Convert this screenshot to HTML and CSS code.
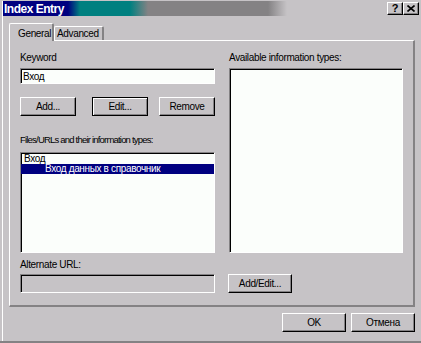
FILE: index.html
```html
<!DOCTYPE html>
<html lang="en">
<head>
	<meta charset="UTF-8">
	<title>Index Entry</title>
	<link rel="stylesheet" href="styles.css">
</head>
<body>
	<div class="window">
		<div class="frame">
			<div class="titlebar">
				<div class="title">Index Entry</div>
				<div class="tbtn">?</div>
				<div class="tbtn">
					<svg width="8" height="7" viewBox="0 0 8 7"><path d="M0.5 0.5 L7.5 6.5 M7.5 0.5 L0.5 6.5" stroke="#000" stroke-width="1.6" fill="none"/></svg>
				</div>
			</div>
			<div class="tabs">
				<div class="tab active">General</div>
				<div class="tab">Advanced</div>
			</div>
			<div class="panel">
				<div class="lbl top">Keyword</div>
				<div class="lbl top right">Available information types:</div>
				<input type="text" class="field" value="Вход">
				<div class="list right-list"></div>
				<div class="btnRow">
					<button class="btn">Add...</button>
					<button class="btn default edit">Edit...</button>
					<button class="btn remove">Remove</button>
				</div>
				<div class="lbl files">Files/URLs and their information types:</div>
				<div class="list files-list">
					<div class="item">Вход</div>
					<div class="item sel">Вход данных в справочник</div>
				</div>
				<div class="lbl alt">Alternate URL:</div>
				<input type="text" class="field disabled" disabled>
				<button class="btn addEdit">Add/Edit...</button>
			</div>
			<div class="footer">
				<button class="btn wide">OK</button>
				<button class="btn wide">Отмена</button>
			</div>
		</div>
	</div>
</body>
</html>
```

FILE: styles.css
```css
*{
	margin: 0;
	padding: 0;
	box-sizing: border-box;
}
body{
	background-color: #c6c3c6;
	font-family: "Liberation Sans", Arial, sans-serif;
	font-size: 10px;
	letter-spacing: -0.35px;
	color: #000;
}
.window{
	width: 421px;
	height: 343px;
	padding: 1px 0 0 2px;
	border-bottom: 2px solid #848284;
}
.frame{
	height: 100%;
	border-left: 1px solid #fff;
	display: flex;
	flex-direction: column;
}
.titlebar{
	height: 15px;
	display: flex;
	align-items: center;
	padding: 0 2px 0 1px;
	background: linear-gradient(to right, #000080 0, #000080 65px, #008080 77px, #008080 127px, #848284 145px, #848284 265px, #c6c3c6 284px);
	color: #fff;
}
.title{
	flex: 1;
	font-size: 12px;
	font-weight: bold;
	letter-spacing: -0.5px;
}
.tbtn{
	width: 16px;
	height: 13px;
	display: flex;
	align-items: center;
	justify-content: center;
	background-color: #c6c3c6;
	border: 1px solid;
	border-color: #fff #000 #000 #fff;
	box-shadow: inset -1px -1px #848284;
	color: #000;
	font-size: 11px;
	font-weight: bold;
	line-height: 11px;
	letter-spacing: 0;
}
.tabs{
	display: flex;
	align-items: flex-end;
	height: 17px;
	margin: 7px 0 0 6px;
}
.tab{
	height: 14px;
	width: 50px;
	padding: 1px 0 0 2px;
	border-top: 1px solid #fff;
	border-left: 1px solid #fff;
	border-right: 2px solid #848284;
	border-radius: 2px 2px 0 0;
	line-height: 12px;
}
.tab.active{
	width: 45px;
	height: 18px;
	padding: 4px 0 0 8px;
	margin-bottom: -1px;
	position: relative;
	z-index: 1;
	background-color: #c6c3c6;
}
.panel{
	margin: 0 6px;
	height: 267px;
	border-top: 1px solid #fff;
	border-left: 1px solid #fff;
	border-right: 2px solid #848284;
	border-bottom: 2px solid #848284;
	padding: 9px 10px 0 10px;
	display: grid;
	grid-template-columns: 195px 174px;
	grid-template-rows: 18px 16px 32px 36px 101px 21px 19px;
	column-gap: 14px;
}
.lbl{
	line-height: 13px;
	white-space: nowrap;
}
.lbl.top{
	align-self: start;
	padding-top: 1px;
}
.lbl.right{
	grid-column: 2;
	grid-row: 1;
}
.lbl.files{
	grid-column: 1;
	grid-row: 4;
	align-self: end;
	margin-bottom: 6px;
	font-size: 9.5px;
	letter-spacing: -0.8px;
}
.lbl.alt{
	grid-column: 1;
	grid-row: 6;
	align-self: end;
	margin-bottom: 3px;
}
.field{
	grid-column: 1;
	height: 16px;
	width: 195px;
	padding: 0 2px;
	font: inherit;
	letter-spacing: inherit;
	color: #000;
	background-color: #fbfefb;
	border: 1px solid;
	border-color: #848284 #fff #fff #848284;
	box-shadow: inset 1px 1px #000;
	outline: none;
}
.field.disabled{
	grid-row: 7;
	height: 19px;
	background-color: #c6c3c6;
}
.list{
	background-color: #fbfefb;
	border: 1px solid;
	border-color: #848284 #fff #fff #848284;
	box-shadow: inset 1px 1px #000;
	padding-top: 1px;
}
.right-list{
	grid-column: 2;
	grid-row: 2 / 6;
}
.files-list{
	grid-column: 1;
	grid-row: 5;
}
.item{
	line-height: 10px;
	padding-left: 3px;
	white-space: nowrap;
}
.item.sel{
	background-color: #000080;
	color: #fff;
	padding-left: 24px;
}
.btnRow{
	grid-column: 1;
	grid-row: 3;
	align-self: end;
	display: flex;
}
.btn{
	width: 56px;
	height: 19px;
	font: inherit;
	letter-spacing: inherit;
	color: #000;
	background-color: #c6c3c6;
	border: 1px solid;
	border-color: #fff #000 #000 #fff;
	box-shadow: inset -1px -1px #848284;
}
.btn.default{
	border-color: #000;
	box-shadow: inset 1px 1px #fff, inset -1px -1px #848284;
}
.btn.edit{
	margin-left: 16px;
}
.btn.remove{
	margin-left: auto;
}
.btn.addEdit{
	grid-column: 2;
	grid-row: 7;
	width: 64px;
	margin-left: -1px;
}
.footer{
	display: flex;
	justify-content: flex-end;
	gap: 5px;
	margin-top: 6px;
	padding-right: 6px;
}
.btn.wide{
	width: 64px;
}
```
